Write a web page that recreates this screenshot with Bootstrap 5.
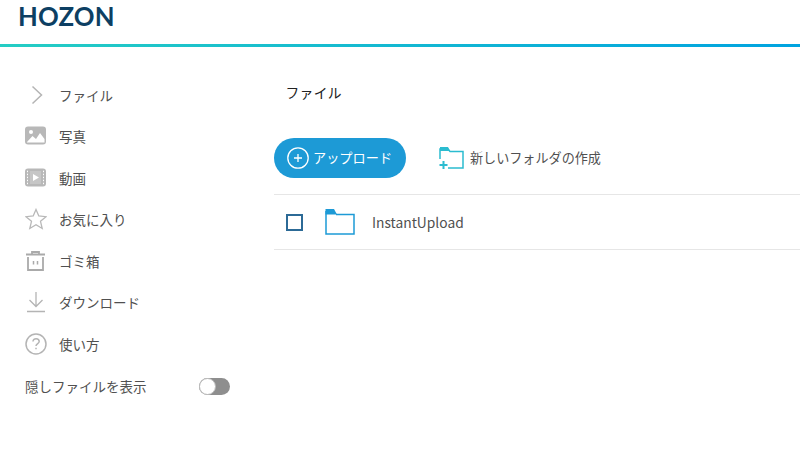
<!DOCTYPE html>
<html lang="ja"><head><meta charset="utf-8">
<link rel="stylesheet" href="https://cdn.jsdelivr.net/npm/bootstrap@5.3.0/dist/css/bootstrap.min.css">
<style>
html,body{height:450px;overflow:hidden;background:#fff}
body{font-family:"Noto Sans CJK JP","Noto Sans",sans-serif;color:#505050;font-size:13.5px}
.topbar{height:47px;padding-left:18px;border-bottom:3px solid;border-image:linear-gradient(90deg,#25cdc4,#00a3e0) 1}
.logo-word{font-family:Lato,sans-serif;font-weight:700;font-size:25.7px;line-height:1;color:#0d3f63;letter-spacing:.15px;margin-top:-10px}
.side{width:274px;padding:27px 0 0 25px;flex:none}
.side-item{height:41.5px}
.side-ico{width:22px;height:22px;margin-right:12px;flex:none}
.toggle-row{height:44px;padding-right:44px}
.switcher{width:31px;height:17px;border-radius:9px;background:#8e8e8e;position:relative}
.switcher::before{content:"";position:absolute;left:0;top:0;width:17px;height:17px;border-radius:50%;background:#fff;border:1px solid #bbb}
.main-col{padding-top:35px}
.crumb{color:#222;padding-left:11.500px;font-size:13.8px;line-height:20px;letter-spacing:.3px}
.tools{margin-top:36px;height:56px}
.upload-btn{width:132px;height:40px;border-radius:20px;background:#1d9ad6;color:#fff;font-size:13.2px;padding:0 0 0 13px;border:0;gap:4px}
.upload-btn:hover{background:#1d9ad6;color:#fff}
.newfolder{margin-left:33px;gap:6px;font-size:13.1px;height:40px}
.file-row{height:56px;border-top:1px solid #e6e6e6;border-bottom:1px solid #e6e6e6;padding-left:12px;font-size:13.8px}
.tick{width:17px;height:17px;border:2px solid #2c6a96;margin-right:22px;flex:none}
.folder{margin-right:17px;flex:none}
</style></head><body>
<header class="topbar d-flex align-items-center"><span class="logo-word">HOZON</span></header>
<div class="d-flex">
<nav class="side">
<div class="side-item d-flex align-items-center"><svg class="side-ico" viewBox="0 0 22 22"><path d="M7.500 2.500 16.500 11 7.500 19.500" fill="none" stroke="#b4b4b4" stroke-width="1.500"/></svg><span>ファイル</span></div>
<div class="side-item d-flex align-items-center"><svg class="side-ico" viewBox="0 0 22 22"><rect y="1.500" width="21" height="18" rx="3" fill="#b8b8b8"/><circle cx="6" cy="7" r="2" fill="#fff"/><path d="M2 17 7.500 11 11 14 15 8 19.500 14V17.500H2Z" fill="#fff"/></svg><span>写真</span></div>
<div class="side-item d-flex align-items-center"><svg class="side-ico" viewBox="0 0 22 22"><rect y="1.500" width="21" height="18" rx="3" fill="#b8b8b8"/><path d="M2.500 3.700V18M18.500 3.700V18" stroke="#fff" stroke-dasharray="1.500 1.500" fill="none"/><rect x="5" y="4" width="11" height="13" fill="#c6c6c6"/><path d="M8 7 14 10.500 8 14Z" fill="#fff"/></svg><span>動画</span></div>
<div class="side-item d-flex align-items-center"><svg class="side-ico" viewBox="0 0 22 22"><path d="M11 1.500 13.800 8 21 8.700 15.500 13.300 17.200 20.500 11 16.700 4.800 20.500 6.500 13.300 1 8.700 8.200 8Z" fill="none" stroke="#b8b8b8" stroke-width="1.300"/></svg><span>お気に入り</span></div>
<div class="side-item d-flex align-items-center"><svg class="side-ico" viewBox="0 0 22 22"><path d="M1 4.500H20M7 4V2H14V4M3 7V20H18V7" fill="none" stroke="#aaa" stroke-width="1.800"/><path d="M8.500 11V14.500M12.500 11V14.500" fill="none" stroke="#aaa" stroke-width="1.500"/></svg><span>ゴミ箱</span></div>
<div class="side-item d-flex align-items-center"><svg class="side-ico" viewBox="0 0 22 22"><path d="M11 1V15M4.500 9 11 15.500 17.500 9M2 20.500H20" fill="none" stroke="#b4b4b4" stroke-width="1.300"/></svg><span>ダウンロード</span></div>
<div class="side-item d-flex align-items-center"><svg class="side-ico" viewBox="0 0 22 22"><circle cx="11" cy="11" r="10" fill="none" stroke="#b4b4b4" stroke-width="1.500"/><path d="M8 8.500C8 4.800 14.200 5 14.200 8.500 14.200 10.500 11 10.700 11 13M11 14.800V16.300" fill="none" stroke="#b4b4b4" stroke-width="1.500"/></svg><span>使い方</span></div>
<div class="toggle-row d-flex align-items-center justify-content-between"><span>隠しファイルを表示</span><span class="switcher"></span></div>
</nav>
<main class="main-col flex-grow-1">
<div class="crumb">ファイル</div>
<div class="tools d-flex align-items-start">
<button class="upload-btn btn d-flex align-items-center"><svg width="22" height="22" viewBox="0 0 22 22"><circle cx="11" cy="11" r="10.200" fill="none" stroke="#fff" stroke-width="1.300"/><path d="M11 7V15M7 11H15" stroke="#fff" stroke-width="1.300"/></svg><span>アップロード</span></button>
<div class="newfolder d-flex align-items-center"><svg width="25" height="24" viewBox="0 0 25 24"><path d="M1 13V3H9L11 5.500H24V22H9" fill="none" stroke="#2bbcd0" stroke-width="1.500"/><path d="M1 1H9L11 5H1Z" fill="#2bbcd0"/><path d="M4.500 15V23M.500 19H8.500" stroke="#2bbcd0" stroke-width="2"/></svg><span>新しいフォルダの作成</span></div>
</div>
<div class="file-row d-flex align-items-center"><span class="tick"></span><svg class="folder" width="30" height="26" viewBox="0 0 30 26"><path d="M1 2V25H29V5.500H11" fill="none" stroke="#1d9ad6" stroke-width="1.500"/><path d="M.500 0H9L12 5.500H.500Z" fill="#1d9ad6"/></svg><span>InstantUpload</span></div>
</main>
</div>
</body></html>
